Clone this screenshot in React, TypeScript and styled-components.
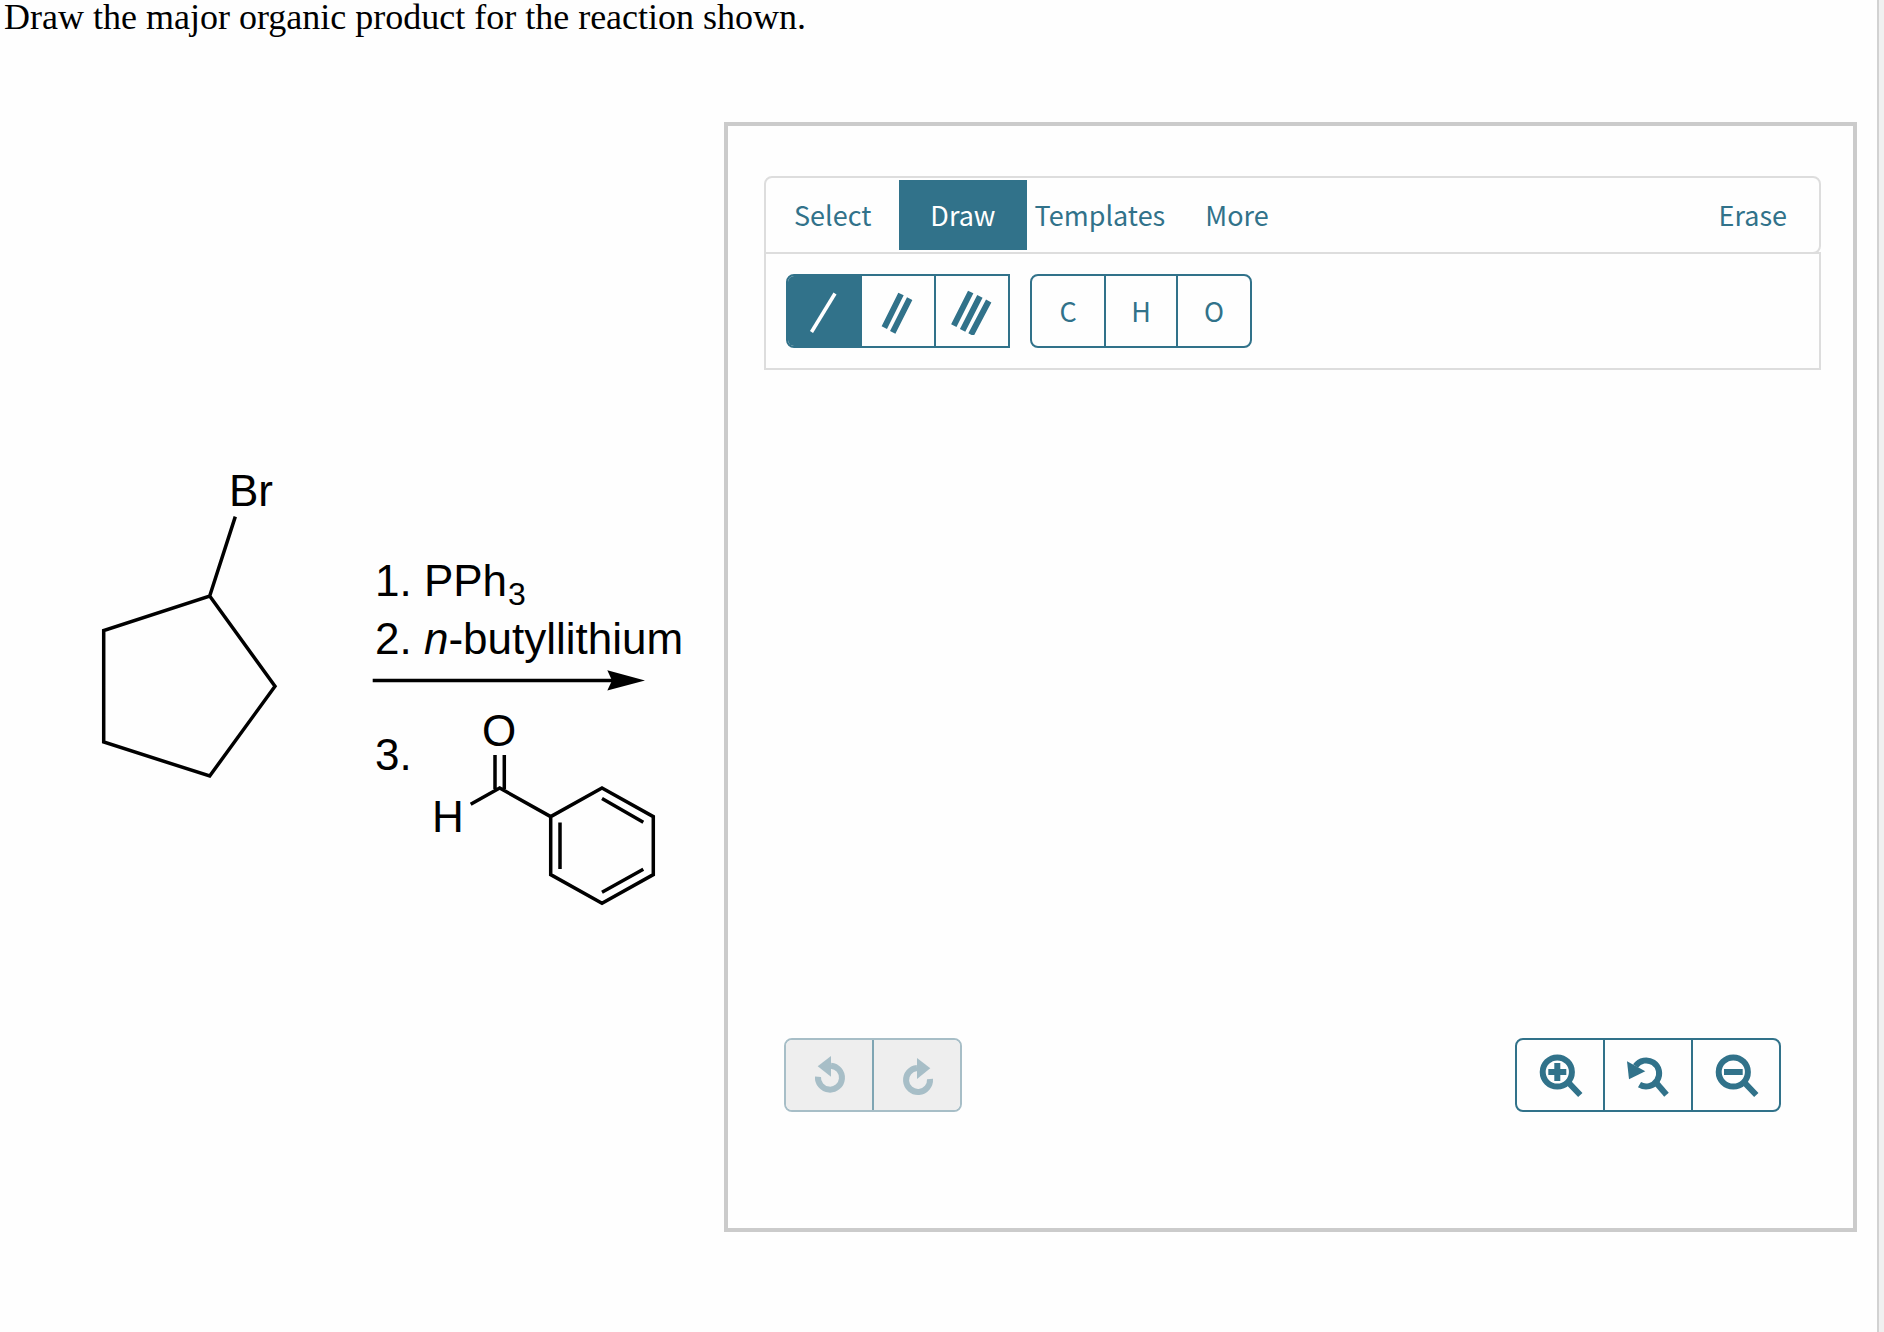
import React, { useState } from "react";
import styled, { createGlobalStyle, css } from "styled-components";

const teal = "#31728a";
const line = "#dddddd";
const sans = `"Noto Sans CJK SC", "Noto Sans", sans-serif`;

const GlobalStyle = createGlobalStyle`
  *, *::before, *::after { box-sizing: border-box; }
  body { margin: 0; background: #fefefe; color: #000; }
  button { margin: 0; font: inherit; cursor: pointer; }
`;

const Page = styled.main`
  display: flex;
  flex-direction: column;
  min-height: 100vh;
  padding-right: 22px;
  border-right: 5px solid #f0f0f0;
  box-shadow: inset -2px 0 0 #d2d2d2;
`;

const Prompt = styled.h1`
  margin: 0 0 88px;
  padding: 0 4px;
  font: 400 36px/34px "Liberation Serif", "Times New Roman", serif;
`;

const Workspace = styled.div`
  display: flex;
  align-items: center;
  gap: 24px;
  padding-left: 90px;
`;

const Scheme = styled.svg`
  flex: none;
  width: 610px;
  height: 460px;
  font-family: "Liberation Sans", Arial, sans-serif;
  font-size: 44px;
`;

const Editor = styled.section`
  display: flex;
  flex: 1;
  flex-direction: column;
  min-width: 0;
  min-height: 1110px;
  padding: 50px 32px 116px 36px;
  border: 4px solid #cbcbcb;
  color: ${teal};
  font-family: ${sans};
`;

const Tabs = styled.nav`
  display: flex;
  height: 78px;
  padding: 2px 0;
  border: 2px solid ${line};
  border-radius: 8px 8px 8px 0;
`;

const Tab = styled.button<{ $pad: number; $active?: boolean; $end?: boolean }>`
  padding: 0 ${(p) => p.$pad}px;
  border: 0;
  background: ${(p) => (p.$active ? teal : "transparent")};
  color: ${(p) => (p.$active ? "#fff" : teal)};
  font-size: 27px;
  line-height: 40px;
  margin-left: ${(p) => (p.$end ? "auto" : "0")};
`;

const Tools = styled.div`
  display: flex;
  gap: 20px;
  margin-top: -2px;
  padding: 20px;
  border: 2px solid ${line};
`;

const Group = styled.div<{ $columns: string; $square?: boolean; $muted?: boolean }>`
  display: grid;
  grid-template-columns: ${(p) => p.$columns};
  height: 74px;
  overflow: hidden;
  border: 2px solid ${(p) => (p.$muted ? "#a7bec7" : teal)};
  border-radius: ${(p) => (p.$square ? "8px 0 0 8px" : "8px")};

  > button + button {
    border-left: 2px solid ${(p) => (p.$muted ? "#7fa5b3" : teal)};
  }
`;

const Cell = styled.button<{ $active?: boolean }>`
  display: flex;
  align-items: center;
  justify-content: center;
  padding: 0;
  border: 0;
  background: ${(p) => (p.$active ? teal : "transparent")};
  color: ${(p) => (p.$active ? "#fff" : teal)};
  font-size: 27px;
  line-height: 40px;

  ${(p) =>
    p.disabled &&
    css`
      background: #eeeeee;
      color: #a7bec7;
      cursor: default;
    `}
`;

const Canvas = styled.div`
  flex: 1;
`;

const Footer = styled.footer`
  display: flex;
  justify-content: space-between;
  padding: 0 40px 0 20px;
`;

const Icon = ({ children }: { children: React.ReactNode }) => (
  <svg width="48" height="48" viewBox="0 0 48 48" fill="none" stroke="currentColor" aria-hidden="true">
    {children}
  </svg>
);

const tabs = [
  { name: "Select", pad: 28 },
  { name: "Draw", pad: 31 },
  { name: "Templates", pad: 8 },
  { name: "More", pad: 32 },
  { name: "Erase", pad: 32 },
];

const bonds = [
  { name: "Single bond", art: <path d="M11.5 45 35 6.5" strokeWidth="3.6" /> },
  { name: "Double bond", art: <path d="M10.3 40.7 27 7M18.7 45.3 35.7 11.7" strokeWidth="6" /> },
  { name: "Triple bond", art: <path d="M5.8 38.7 22.7 5M14.6 43.3 31.9 9.3M23 47.7 40.7 14" strokeWidth="6" /> },
];

function Reaction() {
  return (
    <Scheme viewBox="90 447 610 460" role="img" aria-label="Bromocyclopentane reaction scheme">
      <g fill="none" stroke="#000" strokeWidth="3.5">
        <path d="M209.7 596 275 686.3 209.7 776 103.7 742V630.6ZL235.3 516.6" />
        <path d="M372.7 680.6H616" />
        <path d="M495 755V789M504.3 755V789M470.7 804.3 499.7 788 550.7 816.6" />
        <path d="M602 788 653.3 816.6V874.6L602 903.3 550.7 874.6V816.6Z" />
        <path d="M560 822.6V869M602 798.6 643.3 822.3M602 892.3 643.3 869.3" />
      </g>
      <path d="M607.3 670.3 645 680.6 607.3 690.6 612 680.6Z" />
      <text x="229" y="506">Br</text>
      <text x="375" y="596">1. PPh</text>
      <text x="508" y="605" fontSize="32">3</text>
      <text x="375" y="654">2. <tspan fontStyle="italic">n</tspan>-butyllithium</text>
      <text x="375" y="770">3.</text>
      <text x="499" y="746" textAnchor="middle">O</text>
      <text x="448" y="832" textAnchor="middle">H</text>
    </Scheme>
  );
}

export default function App() {
  const [tab, setTab] = useState("Draw");
  const [bond, setBond] = useState("Single bond");

  return (
    <Page>
      <GlobalStyle />
      <Prompt>Draw the major organic product for the reaction shown.</Prompt>
      <Workspace>
        <Reaction />
        <Editor aria-label="Structure editor">
          <Tabs>
            {tabs.map(({ name, pad }) => (
              <Tab
                key={name}
                type="button"
                $pad={pad}
                $active={tab === name}
                $end={name === "Erase"}
                onClick={() => setTab(name)}
              >
                {name}
              </Tab>
            ))}
          </Tabs>
          <Tools>
            <Group $square $columns="72px 74px 74px">
              {bonds.map((b) => (
                <Cell
                  key={b.name}
                  type="button"
                  aria-label={b.name}
                  $active={bond === b.name}
                  onClick={() => setBond(b.name)}
                >
                  <Icon>{b.art}</Icon>
                </Cell>
              ))}
            </Group>
            <Group $columns="72px 72px 74px">
              {["C", "H", "O"].map((atom) => (
                <Cell key={atom} type="button">{atom}</Cell>
              ))}
            </Group>
          </Tools>
          <Canvas />
          <Footer>
            <Group $muted $columns="86px 88px">
              <Cell type="button" aria-label="Undo" disabled>
                <Icon>
                  <path d="M13 25.7A12 12 0 1 0 26 14.7" strokeWidth="6" />
                  <path d="M12.7 15.3 26 5V25.7Z" fill="currentColor" stroke="none" />
                </Icon>
              </Cell>
              <Cell type="button" aria-label="Redo" disabled>
                <Icon>
                  <path d="M37 28A12 12 0 1 1 24 17" strokeWidth="6" />
                  <path d="M24 7V28L37.3 17.3Z" fill="currentColor" stroke="none" />
                </Icon>
              </Cell>
            </Group>
            <Group $columns="86px 88px 88px">
              <Cell type="button" aria-label="Zoom in">
                <Icon>
                  <circle cx="21.3" cy="21" r="14.6" strokeWidth="6" />
                  <path d="M12.3 21H30.3M21.3 12V30M32 31.2 44.3 44" strokeWidth="6" />
                </Icon>
              </Cell>
              <Cell type="button" aria-label="Reset zoom">
                <Icon>
                  <path d="M11.5 15A13 13 0 1 1 15.5 33.6" strokeWidth="6" />
                  <path d="M3 10.3 5 28.3 21.3 20.3Z" fill="currentColor" stroke="none" />
                  <path d="M31.5 31 42.5 43.7" strokeWidth="6" />
                </Icon>
              </Cell>
              <Cell type="button" aria-label="Zoom out">
                <Icon>
                  <circle cx="21.3" cy="21" r="14.6" strokeWidth="6" />
                  <path d="M12 21H30.7M32 31.2 44.3 44" strokeWidth="6" />
                </Icon>
              </Cell>
            </Group>
          </Footer>
        </Editor>
      </Workspace>
    </Page>
  );
}
